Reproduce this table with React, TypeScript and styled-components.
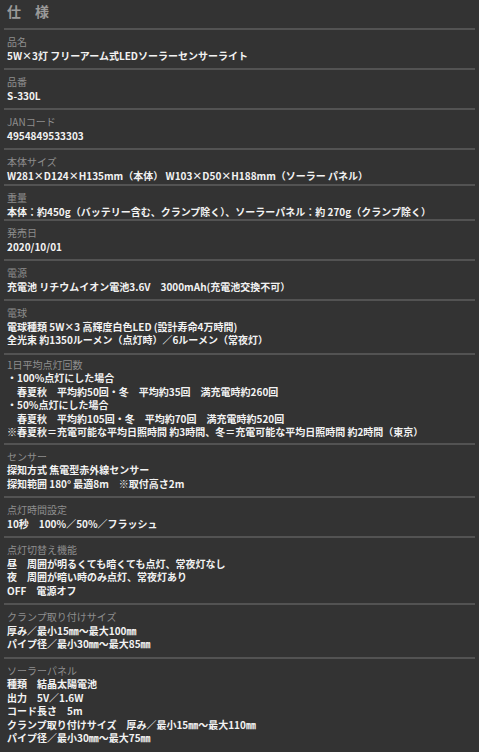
import React from "react";
import styled, { createGlobalStyle } from "styled-components";

const GlobalStyle = createGlobalStyle`
  html, body {
    margin: 0;
    padding: 0;
    background: #333333;
  }
  body {
    font-family: "Noto Sans CJK JP", "Noto Sans", sans-serif;
  }
`;

const Page = styled.div`
  width: 479px;
  min-height: 752px;
  background: #333333;
  display: flex;
  flex-direction: column;
  overflow: hidden;
`;

const Title = styled.h2`
  margin: 0 4px;
  padding: 0 0 6px 3px;
  height: 22px;
  line-height: 22px;
  font-size: 14px;
  font-weight: 700;
  color: #9a9a9a;
  border-bottom: 2px solid #535353;
  letter-spacing: 0;
`;

const Section = styled.section<{ $pt?: number; $pb?: number }>`
  margin: 0 4px;
  padding: ${(p) => p.$pt ?? 5}px 0 ${(p) => p.$pb ?? 6}px 3px;
  border-bottom: 2px solid #535353;
  display: flex;
  flex-direction: column;
  &:last-child {
    border-bottom: none;
  }
`;

const Label = styled.div`
  font-size: 10px;
  line-height: 13.5px;
  color: #8e8e8e;
  font-weight: 400;
  white-space: nowrap;
`;

const Value = styled.div`
  font-size: 10px;
  line-height: 13.5px;
  color: #f2f2f2;
  font-weight: 700;
  white-space: pre;
`;

type Spec = { label: string; lines: string[]; pt?: number; pb?: number };

const specs: Spec[] = [
  { label: "品名", lines: ["5W×3灯 フリーアーム式LEDソーラーセンサーライト"] },
  { label: "品番", lines: ["S-330L"] },
  { label: "JANコード", lines: ["4954849533303"] },
  {
    label: "本体サイズ",
    lines: ["W281×D124×H135mm（本体） W103×D50×H188mm（ソーラー パネル）"],
    pb: 2,
  },
  {
    label: "重量",
    lines: [
      "本体：約450g（バッテリー含む、クランプ除く）、ソーラーパネル：約 270g（クランプ除く）",
    ],
    pb: 1,
  },
  { label: "発売日", lines: ["2020/10/01"] },
  { label: "電源", lines: ["充電池 リチウムイオン電池3.6V　3000mAh(充電池交換不可）"] },
  {
    label: "電球",
    lines: [
      "電球種類 5W×3 高輝度白色LED (設計寿命4万時間)",
      "全光束 約1350ルーメン（点灯時）／6ルーメン（常夜灯）",
    ],
  },
  {
    label: "1日平均点灯回数",
    lines: [
      "・100%点灯にした場合",
      "　春夏秋　平均約50回・冬　平均約35回　満充電時約260回",
      "・50%点灯にした場合",
      "　春夏秋　平均約105回・冬　平均約70回　満充電時約520回",
      "※春夏秋＝充電可能な平均日照時間 約3時間、冬＝充電可能な平均日照時間 約2時間（東京）",
    ],
    pt: 3,
    pb: 4,
  },
  {
    label: "センサー",
    lines: ["探知方式 焦電型赤外線センサー", "探知範囲 180° 最適8m　※取付高さ2m"],
  },
  { label: "点灯時間設定", lines: ["10秒　100%／50%／フラッシュ"] },
  {
    label: "点灯切替え機能",
    lines: [
      "昼　周囲が明るくても暗くても点灯、常夜灯なし",
      "夜　周囲が暗い時のみ点灯、常夜灯あり",
      "OFF　電源オフ",
    ],
  },
  {
    label: "クランプ取り付けサイズ",
    lines: ["厚み／最小15㎜～最大100㎜", "パイプ径／最小30㎜～最大85㎜"],
  },
  {
    label: "ソーラーパネル",
    lines: [
      "種類　結晶太陽電池",
      "出力　5V／1.6W",
      "コード長さ　5m",
      "クランプ取り付けサイズ　厚み／最小15㎜～最大110㎜",
      "パイプ径／最小30㎜～最大75㎜",
    ],
  },
];

export default function App() {
  return (
    <>
      <GlobalStyle />
      <Page>
        <Title>仕　様</Title>
        {specs.map((s) => (
          <Section key={s.label} $pt={s.pt} $pb={s.pb}>
            <Label>{s.label}</Label>
            {s.lines.map((l, i) => (
              <Value key={i}>{l}</Value>
            ))}
          </Section>
        ))}
      </Page>
    </>
  );
}
